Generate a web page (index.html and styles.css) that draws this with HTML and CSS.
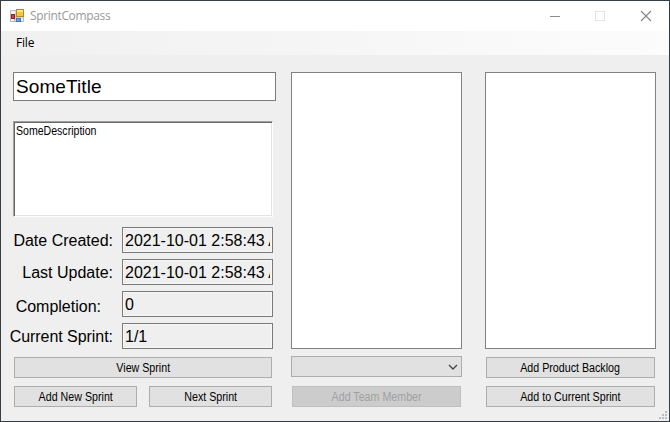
FILE: index.html
```html
<!DOCTYPE html>
<html lang="en">
<head>
<meta charset="utf-8">
<title>SprintCompass</title>
<link rel="stylesheet" href="styles.css">
</head>
<body>
<div class="window">
  <header class="titlebar">
    <svg class="app-icon" width="14" height="14" viewBox="0 0 14 14">
      <path d="M.5 1.500H6V12.500H.5ZM4.500 8H13.500V12.500H4.500Z" fill="#f3f4f6" stroke="#b3b7be"/>
      <rect x="6.500" y=".5" width="7" height="7" fill="#f3c73c" stroke="#b08a2c"/>
      <path d="M7 1H13V3H7Z" fill="#fce68a"/>
      <rect x="1.500" y="5.500" width="3" height="4" fill="#c8443c" stroke="#96201c"/>
      <rect x="6.500" y="9.500" width="4" height="3" fill="#6c9ce4" stroke="#4474c4"/>
    </svg>
    <span class="caption">SprintCompass</span>
    <svg class="controls" width="102" height="12" viewBox="0 0 102 12" fill="none">
      <path d="M0 6.500H10" stroke="#8c8c8c"/>
      <rect x="45.500" y="1.500" width="9" height="9" stroke="#e3e3ee"/>
      <path d="M91 1L101 11M101 1L91 11" stroke="#858585" stroke-width="1.100"/>
    </svg>
  </header>
  <nav class="menubar"><span class="menu-item">File</span></nav>
  <main class="content">
    <section class="details">
      <div class="title-box"><span>SomeTitle</span></div>
      <div class="description"><span class="condensed">SomeDescription</span></div>
      <div class="fields">
        <div class="field"><span class="label">Date Created:</span><div class="value"><span class="clip">2021-10-01 2:58:43 AM</span></div></div>
        <div class="field"><span class="label">Last Update:</span><div class="value"><span class="clip">2021-10-01 2:58:43 AM</span></div></div>
        <div class="field"><span class="label completion">Completion:</span><div class="value"><span class="clip">0</span></div></div>
        <div class="field"><span class="label sprint">Current Sprint:</span><div class="value"><span class="clip">1/1</span></div></div>
      </div>
      <div class="actions">
        <div class="button wide"><span>View Sprint</span></div>
        <div class="button"><span>Add New Sprint</span></div>
        <div class="button"><span>Next Sprint</span></div>
      </div>
    </section>
    <section class="column">
      <div class="list"></div>
      <div class="combo">
        <svg width="10" height="6" viewBox="0 0 10 6" fill="none"><path d="M1 1L5 5L9 1" stroke="#444" stroke-width="1.300"/></svg>
      </div>
      <div class="button disabled"><span>Add Team Member</span></div>
    </section>
    <section class="column backlog">
      <div class="list"></div>
      <div class="button first"><span>Add Product Backlog</span></div>
      <div class="button to-sprint"><span>Add to Current Sprint</span></div>
    </section>
  </main>
  <svg class="grip" width="8" height="8" viewBox="0 0 8 8" fill="#bcbcbc">
    <path d="M6 0h2v2h-2zM3 3h2v2h-2zM6 3h2v2h-2zM0 6h2v2h-2zM3 6h2v2h-2zM6 6h2v2h-2z"/>
  </svg>
</div>
</body>
</html>
```
FILE: styles.css
```css
* { box-sizing: border-box; }

body {
  margin: 0;
  overflow: hidden;
  font-family: "Liberation Sans", Arial, sans-serif;
  color: #000;
}

.window {
  position: relative;
  width: 670px;
  height: 422px;
  border: 1px solid #343e46;
  background: #efefef;
}

.titlebar {
  display: flex;
  align-items: center;
  height: 30px;
  padding: 0 17px 0 9px;
  background: #fff;
}

.app-icon { margin: -1px 6px 0 0; }

.caption {
  flex: 1;
  margin-top: -1px;
  font: 12px "Open Sans", sans-serif;
  letter-spacing: -0.35px;
  color: #999;
}

.controls { margin-top: -1px; }

.menubar {
  height: 24px;
  padding-left: 15px;
  background: linear-gradient(90deg, #f0f0f0, #fcfcfc);
  font: 12px/24px "Open Sans", sans-serif;
  letter-spacing: -0.2px;
}

.content {
  display: grid;
  grid-template-columns: 263px 171px 171px;
  column-gap: 15px;
  padding: 17px 0 0 12px;
}

.backlog { margin-left: 8px; margin-right: -8px; }

.title-box {
  height: 29px;
  padding-left: 2px;
  border: 1px solid #7a7a7a;
  background: #fff;
  font-size: 19px;
  line-height: 27px;
  letter-spacing: 0.1px;
}

.description {
  width: 260px;
  height: 96px;
  margin-top: 20px;
  padding: 3px 2px;
  border: 1px solid;
  border-color: #a0a0a0 #fff #fff #a0a0a0;
  box-shadow: inset 1px 1px #696969, inset -1px -1px #e3e3e3;
  background: #fff;
  font-size: 12px;
  line-height: 13px;
}

.condensed {
  display: inline-block;
  transform: scaleX(0.88);
  transform-origin: left;
}

.fields {
  display: grid;
  gap: 6px;
  margin: 10px 0 0 -5px;
}

.field {
  display: grid;
  grid-template-columns: 106px 151px;
  column-gap: 8px;
  height: 26px;
}

.label {
  justify-self: end;
  height: 26px;
  margin-right: 1px;
  font-size: 16px;
  line-height: 27px;
  white-space: nowrap;
}

.completion { margin-right: 13px; line-height: 32px; }

.sprint { letter-spacing: -0.05px; }

.value {
  display: flex;
  height: 26px;
  padding: 0 2px;
  border: 1px solid #7a7a7a;
  box-shadow: inset 0 0 0 1px #f8f8f8;
  font-size: 16px;
  line-height: 25px;
}

.clip {
  flex: 1;
  overflow: hidden;
  white-space: nowrap;
}

.actions {
  display: grid;
  grid-template-columns: 123px 123px;
  gap: 8px 12px;
  margin: 8px 0 0 1px;
}

.wide { grid-column: span 2; }

.button {
  height: 21px;
  border: 1px solid #adadad;
  background: #e1e1e1;
  font-size: 12px;
  line-height: 20px;
  text-align: center;
  white-space: nowrap;
}

.button span {
  display: inline-block;
  transform: scaleX(0.89);
}

.list {
  height: 277px;
  border: 1px solid #828282;
  background: #fff;
}

.combo {
  display: flex;
  align-items: center;
  justify-content: flex-end;
  height: 21px;
  margin-top: 7px;
  padding-right: 3px;
  border: 1px solid #adadad;
  background: #e1e1e1;
}

.disabled {
  margin: 9px 1px 0;
  border-color: #bfbfbf;
  background: #ccc;
  color: #a0a0a0;
}

.first { margin: 8px 1px 0; }

.to-sprint { margin: 8px 1px 0; }

.grip {
  position: absolute;
  right: 2px;
  bottom: 2px;
}
```
